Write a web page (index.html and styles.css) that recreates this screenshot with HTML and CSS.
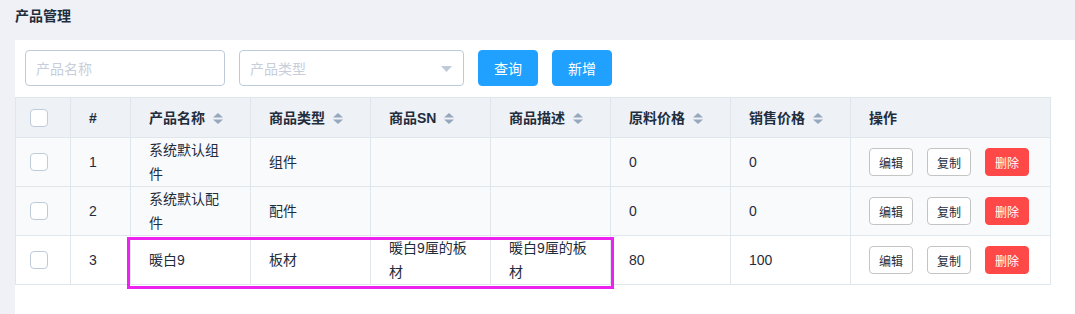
FILE: index.html
```html
<!DOCTYPE html>
<html lang="zh-CN">
<head>
<meta charset="utf-8">
<title>产品管理</title>
<link rel="stylesheet" href="styles.css">
</head>
<body>
<div class="page">
  <h1 class="title">产品管理</h1>
  <div class="card">
    <div class="toolbar">
      <div class="input name-input"><span class="placeholder">产品名称</span></div>
      <div class="input type-select"><span class="placeholder">产品类型</span>
        <svg class="caret" width="11" height="6" viewBox="0 0 11 6"><polygon points="0,0 11,0 5.5,6" fill="#bfcbd9"/></svg>
      </div>
      <button class="btn btn-primary">查询</button>
      <button class="btn btn-primary">新增</button>
    </div>
    <div class="table-wrap">
      <table class="grid">
        <thead>
          <tr>
            <th class="c-sel"><span class="check"></span></th>
            <th class="c-idx">#</th>
            <th class="c-md">产品名称<svg class="sort" width="10" height="11" viewBox="0 0 10 11"><polygon points="0,4.5 5,0 10,4.5" /><polygon points="0,6.5 5,11 10,6.5"/></svg></th>
            <th class="c-md">商品类型<svg class="sort" width="10" height="11" viewBox="0 0 10 11"><polygon points="0,4.5 5,0 10,4.5" /><polygon points="0,6.5 5,11 10,6.5"/></svg></th>
            <th class="c-md">商品SN<svg class="sort" width="10" height="11" viewBox="0 0 10 11"><polygon points="0,4.5 5,0 10,4.5" /><polygon points="0,6.5 5,11 10,6.5"/></svg></th>
            <th class="c-md">商品描述<svg class="sort" width="10" height="11" viewBox="0 0 10 11"><polygon points="0,4.5 5,0 10,4.5" /><polygon points="0,6.5 5,11 10,6.5"/></svg></th>
            <th class="c-md">原料价格<svg class="sort" width="10" height="11" viewBox="0 0 10 11"><polygon points="0,4.5 5,0 10,4.5" /><polygon points="0,6.5 5,11 10,6.5"/></svg></th>
            <th class="c-md">销售价格<svg class="sort" width="10" height="11" viewBox="0 0 10 11"><polygon points="0,4.5 5,0 10,4.5" /><polygon points="0,6.5 5,11 10,6.5"/></svg></th>
            <th class="c-op">操作</th>
          </tr>
        </thead>
        <tbody>
          <tr class="tinted">
            <td><span class="check"></span></td>
            <td>1</td>
            <td>系统默认组件</td>
            <td>组件</td>
            <td></td>
            <td></td>
            <td>0</td>
            <td>0</td>
            <td><div class="ops"><button class="btn btn-sm">编辑</button><button class="btn btn-sm">复制</button><button class="btn btn-sm btn-danger">删除</button></div></td>
          </tr>
          <tr class="tinted">
            <td><span class="check"></span></td>
            <td>2</td>
            <td>系统默认配件</td>
            <td>配件</td>
            <td></td>
            <td></td>
            <td>0</td>
            <td>0</td>
            <td><div class="ops"><button class="btn btn-sm">编辑</button><button class="btn btn-sm">复制</button><button class="btn btn-sm btn-danger">删除</button></div></td>
          </tr>
          <tr>
            <td><span class="check"></span></td>
            <td>3</td>
            <td>暖白9</td>
            <td>板材</td>
            <td>暖白9厘的板材</td>
            <td>暖白9厘的板材</td>
            <td>80</td>
            <td>100</td>
            <td><div class="ops"><button class="btn btn-sm">编辑</button><button class="btn btn-sm">复制</button><button class="btn btn-sm btn-danger">删除</button></div></td>
          </tr>
        </tbody>
      </table>
      <div class="highlight"></div>
    </div>
  </div>
</div>
</body>
</html>
```

FILE: styles.css
```css
* { box-sizing: border-box; }
html, body {
  margin: 0;
  padding: 0;
  background: #eff1f6;
  font-family: "Liberation Sans", "Noto Sans CJK SC", sans-serif;
  color: #1f2d3d;
  overflow: hidden;
}
.page {
  padding-left: 15px;
  min-height: 314px;
}
.title {
  margin: 0;
  padding-top: 6px;
  height: 40px;
  font-size: 14px;
  line-height: 20px;
  font-weight: bold;
  color: #1f2d3d;
}
.card {
  background: #ffffff;
  min-height: 274px;
}
.toolbar {
  display: flex;
  align-items: flex-start;
  gap: 14px;
  padding: 10px 10px 11px 10px;
}
.input {
  position: relative;
  height: 36px;
  border: 1px solid #bfcbd9;
  border-radius: 4px;
  background: #fff;
  display: flex;
  align-items: center;
  padding-left: 10px;
}
.name-input { width: 200px; }
.type-select { width: 225px; }
.placeholder {
  font-size: 14px;
  color: #c7ced9;
}
.caret {
  position: absolute;
  right: 11px;
  top: 15px;
}
.btn {
  font-family: "Liberation Sans", "Noto Sans CJK SC", sans-serif;
  border-radius: 4px;
  cursor: pointer;
  padding: 0;
}
.btn-primary {
  width: 60px;
  height: 36px;
  background: #20a0ff;
  border: 1px solid #20a0ff;
  color: #fff;
  font-size: 14px;
}
.table-wrap {
  position: relative;
  width: 1036px;
}
.grid {
  width: 1036px;
  table-layout: fixed;
  border-collapse: separate;
  border-spacing: 0;
  border-left: 1px solid #dfe6ec;
  border-top: 1px solid #dfe6ec;
  font-size: 14px;
}
.grid th, .grid td {
  border-right: 1px solid #dfe6ec;
  border-bottom: 1px solid #dfe6ec;
  padding: 0 18px;
  text-align: left;
  vertical-align: middle;
  line-height: 24px;
}
.grid th {
  height: 40px;
  background: #eef1f6;
  font-weight: bold;
  color: #1f2d3d;
  white-space: nowrap;
}
.grid td {
  height: 49px;
  color: #1f2d3d;
}
.grid th:first-child, .grid td:first-child {
  padding: 0 0 0 14px;
}
.c-sel { width: 55px; }
.c-idx { width: 60px; }
.c-md { width: 120px; }
.c-op { width: 200px; }
.tinted td { background: #f9fafc; }
.check {
  display: block;
  width: 18px;
  height: 18px;
  border: 1px solid #bfcbd9;
  border-radius: 4px;
  background: #fff;
}
.sort {
  fill: #97a8be;
  margin-left: 8px;
  vertical-align: -1px;
}
.ops {
  display: flex;
  gap: 14px;
  align-items: center;
}
.btn-sm {
  width: 44px;
  height: 28px;
  font-size: 12px;
  background: #fff;
  border: 1px solid #c4c4c4;
  color: #1f2d3d;
}
.btn-danger {
  background: #ff4949;
  border-color: #ff4949;
  color: #fff;
}
.highlight {
  position: absolute;
  left: 112px;
  top: 140px;
  width: 487px;
  height: 52px;
  border: 3px solid #ee22ee;
  pointer-events: none;
}
```
